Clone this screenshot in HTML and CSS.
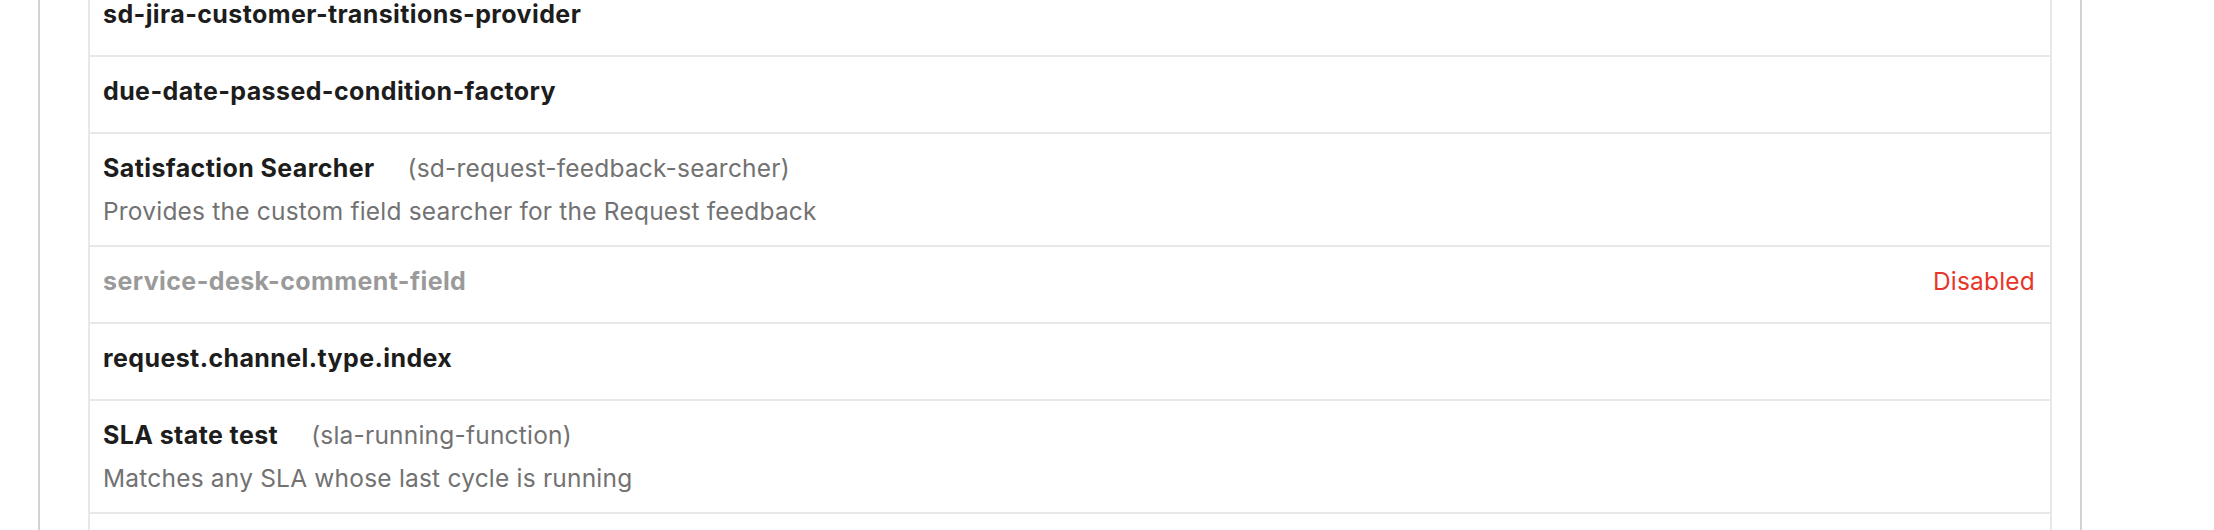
FILE: index.html
```html
<!DOCTYPE html>
<html lang="en">
<head>
<meta charset="utf-8">
<title>Modules</title>
<link rel="stylesheet" href="styles.css">
</head>
<body>
<div class="panel">
  <div class="list">
    <div class="row">
      <div class="head"><span class="name">sd-jira-customer-transitions-provider</span></div>
    </div>
    <div class="row">
      <div class="head"><span class="name">due-date-passed-condition-factory</span></div>
    </div>
    <div class="row">
      <div class="head"><span class="name">Satisfaction Searcher</span><span class="key">(sd-request-feedback-searcher)</span></div>
      <div class="desc">Provides the custom field searcher for the Request feedback</div>
    </div>
    <div class="row disabled">
      <div class="head"><span class="name">service-desk-comment-field</span><span class="status">Disabled</span></div>
    </div>
    <div class="row">
      <div class="head"><span class="name">request.channel.type.index</span></div>
    </div>
    <div class="row">
      <div class="head"><span class="name">SLA state test</span><span class="key">(sla-running-function)</span></div>
      <div class="desc">Matches any SLA whose last cycle is running</div>
    </div>
    <div class="row empty"></div>
  </div>
</div>
</body>
</html>
```
FILE: styles.css
```css
html, body {
  margin: 0;
  padding: 0;
  background: #ffffff;
}
body {
  font-family: Inter, "Noto Sans", "Liberation Sans", sans-serif;
  height: 530px;
  overflow: hidden;
}
.panel {
  margin: 0 132px 0 38px;
  height: 530px;
  border-left: 2px solid #d2d2d2;
  border-right: 2px solid #d2d2d2;
  overflow: hidden;
}
.list {
  margin: -20px 28px 0 48px;
  border-left: 2px solid #e8e8e8;
  border-right: 2px solid #e8e8e8;
}
.row {
  padding: 14px 15px 21px 13px;
  border-bottom: 2px solid #e8e8e8;
}
.row.empty {
  height: 60px;
  padding: 0;
  border-bottom: none;
}
.head {
  display: flex;
  align-items: baseline;
  height: 40px;
  line-height: 40px;
}
.name {
  font-size: 25px;
  font-weight: 700;
  letter-spacing: 0.4px;
  color: #1d1d1d;
}
.key {
  margin-left: 33px;
  font-size: 24.5px;
  letter-spacing: 0.2px;
  color: #727272;
}
.status {
  margin-left: auto;
  font-size: 24.5px;
  letter-spacing: 0.2px;
  color: #e8352c;
}
.disabled .name {
  color: #9a9a9a;
}
.desc {
  margin-top: 10px;
  font-size: 24.5px;
  letter-spacing: 0.2px;
  line-height: 26px;
  color: #727272;
}
```
